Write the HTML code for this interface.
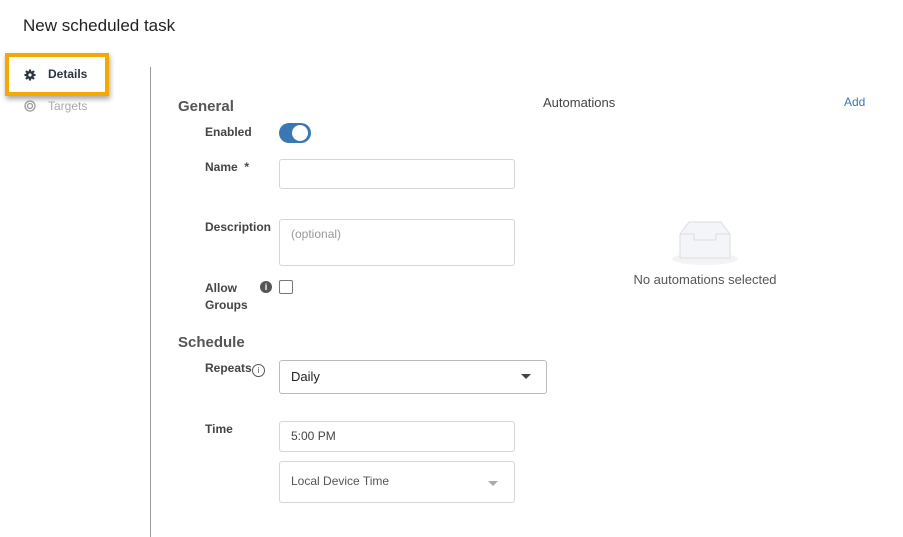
<!DOCTYPE html>
<html><head><style>
body{margin:0;width:903px;height:537px;background:#fff;font-family:"Liberation Sans",sans-serif;position:relative;overflow:hidden;color:#333}
.a{position:absolute}
.lbl{position:absolute;left:205px;font-size:12px;font-weight:bold;color:#444}
.in{position:absolute;left:279px;border:1px solid #d6d6d6;border-radius:3px;box-sizing:border-box;background:#fff}
.h{position:absolute;left:178px;font-size:15px;font-weight:bold;color:#555}
</style></head><body>
<div class="a" style="left:23px;top:16px;font-size:17px;color:#222">New scheduled task</div>
<div class="a" style="left:5px;top:53px;width:96px;height:35px;border:4px solid #f4a900;box-shadow:1px 3px 5px rgba(0,0,0,.35);background:#fff"></div>
<svg class="a" style="left:24px;top:69px" width="12" height="12" viewBox="0 0 12 12"><circle cx="6" cy="6" r="4" fill="#2b3440"/><g stroke="#2b3440" stroke-width="2.2"><line x1="6" y1="0.5" x2="6" y2="11.5"/><line x1="0.5" y1="6" x2="11.5" y2="6"/><line x1="2" y1="2" x2="10" y2="10"/><line x1="10" y1="2" x2="2" y2="10"/></g><circle cx="6" cy="6" r="1.6" fill="#fff"/></svg>
<div class="a" style="left:48px;top:67px;font-size:12px;font-weight:bold;color:#2b3440">Details</div>
<svg class="a" style="left:24px;top:100px" width="12" height="12"><circle cx="6" cy="6" r="5" fill="none" stroke="#999" stroke-width="1.3"/><circle cx="6" cy="6" r="2.5" fill="none" stroke="#999" stroke-width="1.3"/></svg>
<div class="a" style="left:48px;top:99px;font-size:12px;color:#aaa">Targets</div>
<div class="a" style="left:150px;top:67px;width:1px;height:470px;background:#999"></div>

<div class="h" style="top:98px">General</div>
<div class="lbl" style="top:125px">Enabled</div>
<div class="a" style="left:279px;top:123px;width:32px;height:20px;border-radius:10px;background:#3a78b5"></div>
<div class="a" style="left:292px;top:125px;width:16px;height:16px;border-radius:50%;background:#fff"></div>
<div class="lbl" style="top:160px">Name&nbsp; *</div>
<div class="in" style="top:159px;width:236px;height:30px"></div>
<div class="lbl" style="top:220px">Description</div>
<div class="in" style="top:219px;width:236px;height:47px"></div>
<div class="a" style="left:291px;top:227px;font-size:12px;color:#999">(optional)</div>
<div class="lbl" style="top:280px;line-height:17px">Allow<br>Groups</div>
<div class="a" style="left:260px;top:281px;width:12px;height:12px;border-radius:50%;background:#555;color:#fff;font-size:9px;font-weight:bold;text-align:center;line-height:12px">i</div>
<div class="a" style="left:279px;top:280px;width:14px;height:14px;border:1px solid #777;border-radius:2px;box-sizing:border-box"></div>

<div class="h" style="top:334px">Schedule</div>
<div class="lbl" style="top:361px">Repeats</div>
<div class="a" style="left:252px;top:364px;width:11px;height:11px;border:1px solid #555;border-radius:50%;font-size:8px;text-align:center;line-height:11px;color:#555">i</div>
<div class="in" style="top:360px;width:268px;height:34px;border-color:#bbb"></div>
<div class="a" style="left:291px;top:369px;font-size:13px;color:#222">Daily</div>
<div class="a" style="left:521px;top:374px;border-left:5px solid transparent;border-right:5px solid transparent;border-top:5px solid #444"></div>
<div class="lbl" style="top:422px">Time</div>
<div class="in" style="top:421px;width:236px;height:31px"></div>
<div class="a" style="left:291px;top:429px;font-size:12px;color:#444">5:00 PM</div>
<div class="in" style="top:461px;width:236px;height:42px"></div>
<div class="a" style="left:291px;top:474px;font-size:12px;color:#555">Local Device Time</div>
<div class="a" style="left:488px;top:481px;border-left:5px solid transparent;border-right:5px solid transparent;border-top:5px solid #aaa"></div>

<div class="a" style="left:543px;top:95px;font-size:13px;color:#444">Automations</div>
<div class="a" style="left:844px;top:95px;font-size:12px;color:#3a78b5">Add</div>
<svg class="a" style="left:670px;top:218px" width="70" height="48"><ellipse cx="35" cy="41" rx="33" ry="6" fill="#f3f3f5"/><path d="M10 16 L19 4 H51 L60 16 V40 H10 Z" fill="#f4f5f9" stroke="#ddd"/><path d="M10 16 H24 V22 H46 V16 H60" fill="none" stroke="#ddd"/></svg>
<div class="a" style="left:600px;top:272px;width:210px;text-align:center;font-size:13px;color:#555">No automations selected</div>
</body></html>
